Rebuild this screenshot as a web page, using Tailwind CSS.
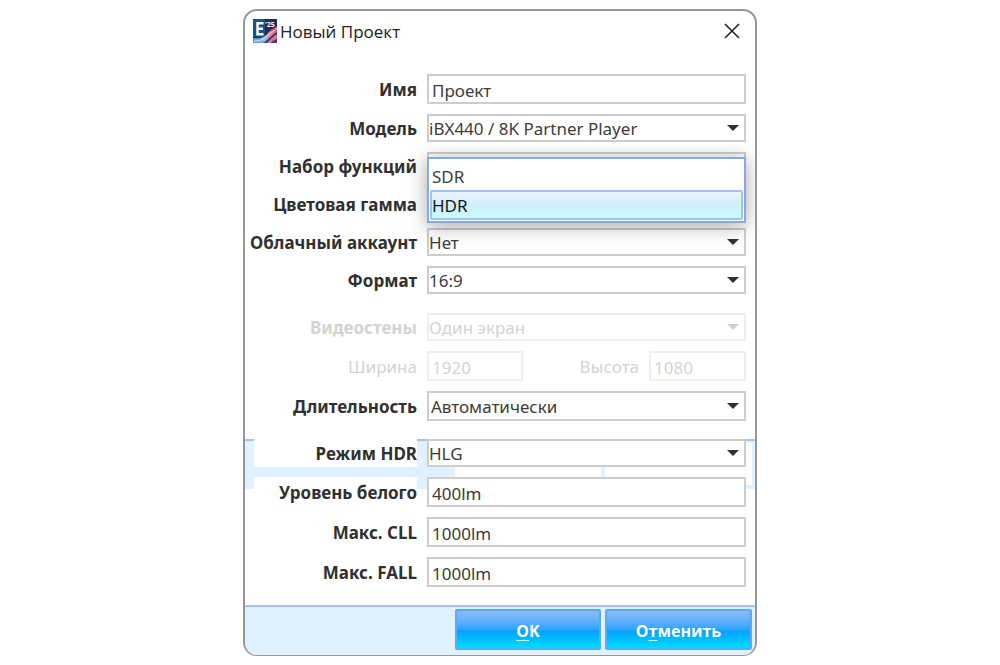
<!DOCTYPE html>
<html lang="ru">
<head>
  <meta charset="UTF-8" />
  <meta name="viewport" content="width=device-width, initial-scale=1.0" />
  <title>Новый Проект</title>
  <script src="https://cdn.jsdelivr.net/npm/@tailwindcss/browser@4"></script>
</head>
<body class="bg-white pt-[9px] font-['Noto_Sans',sans-serif] text-[17px] text-[#3c3c3c]">

  <main class="mx-auto max-w-[514px] overflow-hidden rounded-[14px] border-2 border-b border-[#979797] bg-white">

    <!-- Title bar -->
    <header class="flex h-10 items-center justify-between pl-2 pr-[15px]">
      <div class="flex items-center gap-[3px]">
        <svg class="size-6" viewBox="0 0 24 24" aria-hidden="true">
          <defs>
            <linearGradient id="wave" x1="0" y1="1" x2="1" y2="0">
              <stop offset="0" stop-color="#2fa9d4" />
              <stop offset="0.35" stop-color="#8fbfe4" />
              <stop offset="0.6" stop-color="#ef7f9e" />
              <stop offset="1" stop-color="#e0405f" />
            </linearGradient>
          </defs>
          <rect width="24" height="24" fill="#1b2d55" />
          <rect width="12" height="18" fill="#1a5288" />
          <path d="M0 19C8 20 12 18 15 14C18 10 21 10 24 7V24H0Z" fill="url(#wave)" />
          <path d="M1 22C9 22 12 19 15 16C18 13 21 13 24 9" fill="none" stroke="#f9d5de" stroke-width="1" />
          <path d="M10 24C14 22 17 17 24 13V15C20 18 17 21 14 24Z" fill="#43366d" />
          <path d="M15 24C18 20 21 19 24 17V24Z" fill="#e56d84" />
          <path d="M18 24C20 21 22 21 24 20V24Z" fill="#3b3f7c" />
          <path d="M10.500 4.200H4.500V15.300H10.500M4.500 9.700H10" fill="none" stroke="#fff" stroke-width="2.400" />
          <text x="12" y="7.500" font-family="Open Sans" font-size="7" font-weight="700" fill="#fff">'25</text>
        </svg>
        <h1 class="pt-px font-['Open_Sans',sans-serif] text-[17px] leading-6 text-[#222]">Новый Проект</h1>
      </div>
      <button type="button" aria-label="Закрыть">
        <svg class="size-4" viewBox="0 0 16 16" fill="none" stroke="#1f1f28" stroke-width="1.500"><path d="M1 1L15 15M15 1L1 15" /></svg>
      </button>
    </header>

    <form id="projectForm" class="flex flex-col gap-[10px] px-[9px] pt-[23px] pb-[18px]">
      <div class="grid grid-cols-[163px_1fr] items-center gap-[10px]">
        <label for="name" class="h-7 text-right font-bold leading-[30px] text-[#303030]">Имя</label>
        <input id="name" type="text" value="Проект" class="h-[30px] w-full min-w-0 border-2 border-[#cdcdcd] bg-white px-[3px] pt-[2px]">
      </div>

      <div class="grid grid-cols-[163px_1fr] items-center gap-[10px]">
        <label for="model" class="h-7 text-right font-bold leading-[30px] text-[#303030]">Модель</label>
        <div class="relative">
          <select id="model" class="block h-7 w-full appearance-none border-2 border-[#cdcdcd] bg-white pt-px leading-6"><option>iBX440 / 8K Partner Player</option></select>
          <svg class="pointer-events-none absolute top-[11px] right-[7px] h-[6px] w-3" viewBox="0 0 12 6" fill="#303030"><path d="M0 0H12L6 6Z" /></svg>
        </div>
      </div>

      <div class="grid grid-cols-[163px_1fr] items-center gap-[10px]">
        <label for="features" class="h-7 text-right font-bold leading-[30px] text-[#303030]">Набор функций</label>
        <select id="features" class="block h-7 w-full appearance-none border-2 border-[#cdcdcd] bg-white leading-6"><option></option></select>
      </div>

      <!-- Gamut, with its list open -->
      <div class="grid grid-cols-[163px_1fr] items-center gap-[10px]">
        <label for="gamut" class="h-7 text-right font-bold leading-[30px] text-[#303030]">Цветовая гамма</label>
        <div class="relative">
          <select id="gamut" class="block h-7 w-full appearance-none border-2 border-[#cdcdcd] bg-white leading-6"><option></option></select>
          <div role="listbox" aria-label="Цветовая гамма" class="absolute inset-x-0 -bottom-[5px] z-10 border-2 border-[#82abe8] bg-white px-px pt-1 pb-px shadow-[0_3px_18px_rgba(0,0,0,0.35)]">
            <button type="button" role="option" class="block h-[27px] w-full px-[2px] text-left leading-7">SDR</button>
            <button type="button" role="option" aria-selected="true" class="block h-[30px] w-full rounded-xs border-2 border-[#a3c0ee] bg-linear-to-b from-[#eaf5ff] via-[#d2edfd] to-[#c9fbff] text-left leading-7 text-[#151515]">HDR</button>
          </div>
        </div>
      </div>

      <div class="grid grid-cols-[163px_1fr] items-center gap-[10px]">
        <label for="account" class="-ml-1 h-7 whitespace-nowrap text-right font-bold leading-[30px] text-[#303030]">Облачный аккаунт</label>
        <div class="relative">
          <select id="account" class="block h-7 w-full appearance-none border-2 border-[#cdcdcd] bg-white pt-px leading-6"><option>Нет</option></select>
          <svg class="pointer-events-none absolute top-[11px] right-[7px] h-[6px] w-3" viewBox="0 0 12 6" fill="#303030"><path d="M0 0H12L6 6Z" /></svg>
        </div>
      </div>

      <div class="grid grid-cols-[163px_1fr] items-center gap-[10px]">
        <label for="format" class="h-7 text-right font-bold leading-[30px] text-[#303030]">Формат</label>
        <div class="relative">
          <select id="format" class="block h-7 w-full appearance-none border-2 border-[#cdcdcd] bg-white pt-px leading-6"><option>16:9</option></select>
          <svg class="pointer-events-none absolute top-[11px] right-[7px] h-[6px] w-3" viewBox="0 0 12 6" fill="#303030"><path d="M0 0H12L6 6Z" /></svg>
        </div>
      </div>

      <!-- Video wall, disabled -->
      <div class="mt-[9px] grid grid-cols-[163px_1fr] items-center gap-[10px]">
        <label for="wall" class="h-7 text-right font-bold leading-[30px] text-[#d3d3d3]">Видеостены</label>
        <div class="relative">
          <select id="wall" disabled class="block h-7 w-full appearance-none border-2 border-[#eeeeee] bg-white pt-px leading-6 text-[#d3d3d3] opacity-100"><option>Один экран</option></select>
          <svg class="pointer-events-none absolute top-[11px] right-[7px] h-[6px] w-3" viewBox="0 0 12 6" fill="#cfcfcf"><path d="M0 0H12L6 6Z" /></svg>
        </div>
      </div>

      <div class="grid grid-cols-[163px_96px_1fr_97px] items-center gap-[10px] text-[#d3d3d3]">
        <label for="width" class="h-7 text-right leading-[30px]">Ширина</label>
        <input id="width" type="text" value="1920" disabled class="h-[30px] w-full min-w-0 border-2 border-[#eeeeee] bg-white px-[3px] pt-[2px]">
        <label for="height" class="h-7 text-right leading-[30px]">Высота</label>
        <input id="height" type="text" value="1080" disabled class="h-[30px] w-full min-w-0 border-2 border-[#eeeeee] bg-white px-[3px] pt-[2px]">
      </div>

      <div class="grid grid-cols-[163px_1fr] items-center gap-[10px]">
        <label for="duration" class="h-7 text-right font-bold leading-[30px] text-[#303030]">Длительность</label>
        <div class="relative">
          <select id="duration" class="block h-[30px] w-full appearance-none border-2 border-[#cdcdcd] bg-white px-[2px] pt-px leading-6"><option>Автоматически</option></select>
          <svg class="pointer-events-none absolute top-3 right-[7px] h-[6px] w-3" viewBox="0 0 12 6" fill="#303030"><path d="M0 0H12L6 6Z" /></svg>
        </div>
      </div>

      <!-- HDR settings -->
      <div class="relative mt-2 flex flex-col gap-[10px]">
        <div class="absolute -inset-x-[9px] top-0 flex h-[50px] justify-end gap-1 border-t-2 border-[#a9c1e6] bg-[#e0f2ff] pt-[2px] pr-[3px] pb-1" aria-hidden="true">
          <div class="w-[146px] bg-white"></div>
          <div class="w-[147px] bg-white"></div>
        </div>

        <div class="relative grid grid-cols-[163px_1fr] items-center gap-[10px]">
          <label for="hdrMode" class="h-7 bg-white text-right font-bold leading-[30px] text-[#303030]">Режим HDR</label>
          <div class="relative">
            <select id="hdrMode" class="block h-7 w-full appearance-none border-2 border-[#cdcdcd] bg-white pt-px leading-6"><option>HLG</option></select>
            <svg class="pointer-events-none absolute top-[11px] right-[7px] h-[6px] w-3" viewBox="0 0 12 6" fill="#303030"><path d="M0 0H12L6 6Z" /></svg>
          </div>
        </div>

        <div class="relative grid grid-cols-[163px_1fr] items-center gap-[10px]">
          <label for="whiteLevel" class="h-[30px] bg-white text-right font-bold leading-8 text-[#303030]">Уровень белого</label>
          <input id="whiteLevel" type="text" value="400lm" class="h-[30px] w-full min-w-0 border-2 border-[#cdcdcd] bg-white px-[3px] pt-[2px]">
        </div>

        <div class="grid grid-cols-[163px_1fr] items-center gap-[10px]">
          <label for="maxCll" class="h-7 text-right font-bold leading-[30px] text-[#303030]">Макс. CLL</label>
          <input id="maxCll" type="text" value="1000lm" class="h-[30px] w-full min-w-0 border-2 border-[#cdcdcd] bg-white px-[3px] pt-[2px]">
        </div>

        <div class="grid grid-cols-[163px_1fr] items-center gap-[10px]">
          <label for="maxFall" class="h-7 text-right font-bold leading-[30px] text-[#303030]">Макс. FALL</label>
          <input id="maxFall" type="text" value="1000lm" class="h-[30px] w-full min-w-0 border-2 border-[#cdcdcd] bg-white px-[3px] pt-[2px]">
        </div>
      </div>
    </form>

    <!-- Buttons -->
    <footer class="flex justify-end gap-1 border-t-2 border-[#a9c1e6] bg-[#e0f2ff] pt-[2px] pr-[3px] pb-[5px] font-['Open_Sans',sans-serif] text-base">
      <button type="submit" form="projectForm" class="h-[41px] w-[146px] rounded-xs border-2 border-[#5ba9f7] bg-linear-to-b from-[#85bafa] from-5% via-[#08a2fd] via-55% to-[#00dcff] pt-[2px] font-bold text-white"><span class="underline underline-offset-3">O</span>K</button>
      <button type="button" class="h-[41px] w-[147px] rounded-xs border-2 border-[#5ba9f7] bg-linear-to-b from-[#85bafa] from-5% via-[#08a2fd] via-55% to-[#00dcff] pt-[2px] font-bold text-white">О<span class="underline underline-offset-3">т</span>менить</button>
    </footer>
  </main>

</body>
</html>
